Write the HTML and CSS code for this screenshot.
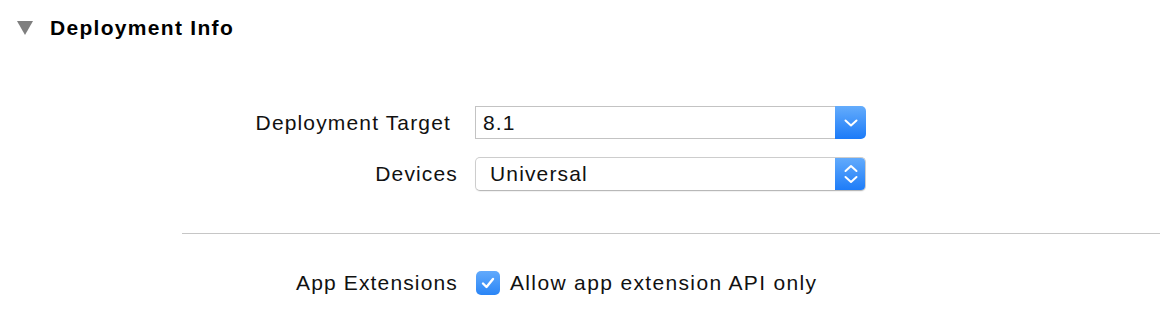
FILE: index.html
```html
<!DOCTYPE html>
<html lang="en">
<head>
  <meta charset="UTF-8" />
  <title>Deployment Info</title>
  <link rel="stylesheet" href="styles.css">
</head>
<body>
  <div class="section">
    <div class="disclosure">
      <span class="triangle"></span>
      <h2>Deployment Info</h2>
    </div>

    <div class="form">
      <label class="label label-combo">Deployment Target</label>
      <div class="combo">
        <span class="combo-value">8.1</span>
        <span class="combo-button">
          <svg width="14" height="8" viewBox="0 0 14 8"><path d="M1.5 1.5 L7 6.5 L12.5 1.5" fill="none" stroke="#fff" stroke-width="2" stroke-linecap="round" stroke-linejoin="round"/></svg>
        </span>
      </div>

      <label class="label">Devices</label>
      <div class="popup">
        <span class="popup-value">Universal</span>
        <span class="popup-button">
          <svg width="14" height="20" viewBox="0 0 14 20"><path d="M1.5 7 L7 2 L12.5 7 M1.5 13 L7 18 L12.5 13" fill="none" stroke="#fff" stroke-width="2" stroke-linecap="round" stroke-linejoin="round"/></svg>
        </span>
      </div>
    </div>

    <hr class="separator">

    <div class="form form-bottom">
      <label class="label">App Extensions</label>
      <div class="check-row">
        <span class="checkbox">
          <svg width="16" height="14" viewBox="0 0 16 14"><path d="M3 7.5 L6.5 11 L13 3" fill="none" stroke="#fff" stroke-width="2.4" stroke-linecap="round" stroke-linejoin="round"/></svg>
        </span>
        <span class="check-text">Allow app extension API only</span>
      </div>
    </div>
  </div>
</body>
</html>
```

FILE: styles.css
```css
body {
  margin: 0;
  background: #ffffff;
  font-family: 'Liberation Sans', Arial, sans-serif;
  font-size: 21px;
  letter-spacing: 1.15px;
  color: #111;
}

.section {
  width: 1172px;
  height: 320px;
}

.disclosure {
  display: flex;
  align-items: center;
  padding: 16px 0 0 17px;
  height: 24px;
}

.triangle {
  width: 0;
  height: 0;
  border-left: 8px solid transparent;
  border-right: 8px solid transparent;
  border-top: 14px solid #7f7f7f;
  margin-right: 17px;
}

h2 {
  margin: 0;
  font-size: 21px;
  font-weight: bold;
  line-height: 24px;
  letter-spacing: 1.3px;
  color: #000;
}

.form {
  display: grid;
  grid-template-columns: 458px 391px;
  grid-auto-rows: auto;
  column-gap: 17px;
  row-gap: 18px;
  margin-top: 66px;
}

.label {
  text-align: right;
  align-self: center;
  color: #111;
}

.label-combo {
  padding-right: 7px;
}

.combo {
  display: flex;
  height: 33px;
  box-sizing: border-box;
}

.combo-value {
  flex: 1;
  display: flex;
  align-items: center;
  padding-left: 7px;
  border: 1px solid #c3c3c3;
  border-right: none;
  background: #fff;
}

.combo-button,
.popup-button {
  width: 31px;
  display: flex;
  align-items: center;
  justify-content: center;
  background: linear-gradient(to bottom, #64acfc, #1c7bf8);
  border-radius: 0 5px 5px 0;
}

.popup {
  display: flex;
  height: 34px;
  box-sizing: border-box;
  border: 1px solid #cdcdcd;
  border-bottom-color: #b8b8b8;
  border-radius: 5px;
  background: #fff;
  box-shadow: 0 1px 1px rgba(0, 0, 0, 0.06);
  overflow: hidden;
}

.popup-value {
  flex: 1;
  display: flex;
  align-items: center;
  padding-left: 14px;
}

.popup-button {
  margin: -1px -1px -1px 0;
}

.separator {
  margin: 42px 12px 0 182px;
  border: none;
  border-top: 1px solid #c6c6c6;
  height: 0;
}

.form-bottom {
  margin-top: 37px;
}

.check-row {
  display: flex;
  align-items: center;
  height: 24px;
  padding-left: 1px;
}

.checkbox {
  width: 24px;
  height: 24px;
  border-radius: 5px;
  background: linear-gradient(to bottom, #62aafc, #2a85f6);
  display: flex;
  align-items: center;
  justify-content: center;
  margin-right: 10px;
}

.check-text {
  color: #111;
  letter-spacing: 1.35px;
}
```
